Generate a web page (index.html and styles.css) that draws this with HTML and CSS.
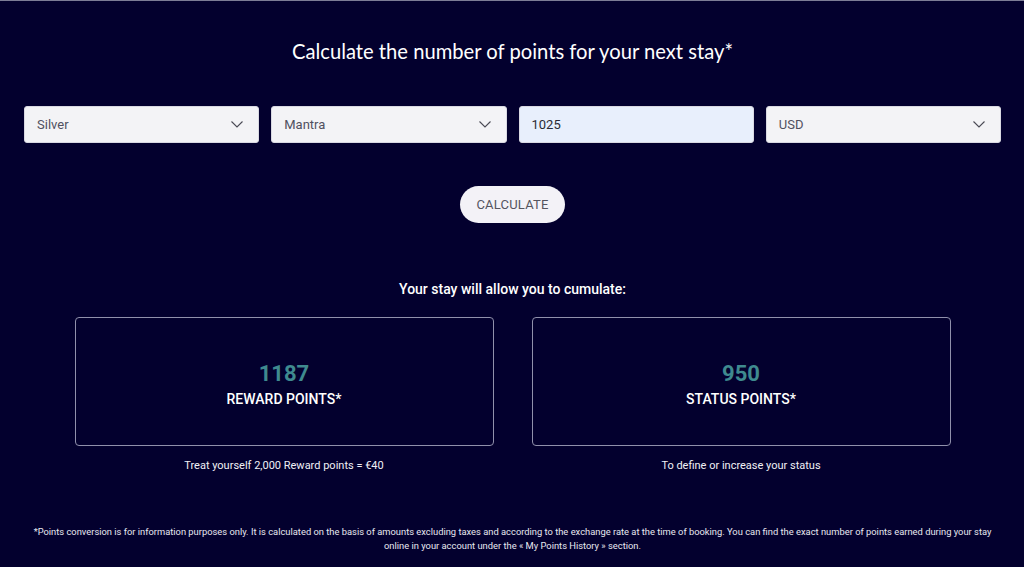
FILE: index.html
```html
<!DOCTYPE html>
<html lang="en">
<head>
<meta charset="utf-8">
<title>Points calculator</title>
<link rel="stylesheet" href="styles.css">
</head>
<body>
<div class="page">
  <h1 class="title">Calculate the number of points for your next stay*</h1>
  <div class="fields">
    <div class="field select"><span>Silver</span><svg class="chev" width="12" height="7" viewBox="0 0 12 7"><path d="M0.5 0.5 L6 6 L11.5 0.5" fill="none" stroke="#4a4a55" stroke-width="1.1"/></svg></div>
    <div class="field select"><span>Mantra</span><svg class="chev" width="12" height="7" viewBox="0 0 12 7"><path d="M0.5 0.5 L6 6 L11.5 0.5" fill="none" stroke="#4a4a55" stroke-width="1.1"/></svg></div>
    <div class="field input"><span>1025</span></div>
    <div class="field select"><span>USD</span><svg class="chev" width="12" height="7" viewBox="0 0 12 7"><path d="M0.5 0.5 L6 6 L11.5 0.5" fill="none" stroke="#4a4a55" stroke-width="1.1"/></svg></div>
  </div>
  <div class="actions"><button class="calc">CALCULATE</button></div>
  <p class="lead">Your stay will allow you to cumulate:</p>
  <div class="results">
    <div class="col">
      <div class="card"><div class="num">1187</div><div class="label">REWARD POINTS*</div></div>
      <p class="note">Treat yourself 2,000 Reward points = €40</p>
    </div>
    <div class="col">
      <div class="card"><div class="num">950</div><div class="label">STATUS POINTS*</div></div>
      <p class="note">To define or increase your status</p>
    </div>
  </div>
  <p class="foot">*Points conversion is for information purposes only. It is calculated on the basis of amounts excluding taxes and according to the exchange rate at the time of booking. You can find the exact number of points earned during your stay online in your account under the « My Points History » section.</p>
</div>
</body>
</html>
```
FILE: styles.css
```css
html, body {
  margin: 0;
  padding: 0;
  background: #03002e;
  height: 100%;
}
body {
  border-top: 1px solid #7d7d96;
  box-sizing: border-box;
  font-family: Roboto, "Liberation Sans", sans-serif;
  color: #fff;
  overflow: hidden;
}
.page {
  padding: 36px 23px 0 24px;
}
.title {
  margin: 0;
  font-family: Lato, "Open Sans", sans-serif;
  font-weight: 400;
  font-size: 20.2px;
  line-height: 28px;
  text-align: center;
  color: #fff;
}
.fields {
  display: grid;
  grid-template-columns: repeat(4, 1fr);
  column-gap: 12px;
  margin-top: 41px;
}
.field {
  height: 37px;
  box-sizing: border-box;
  border-radius: 3px;
  background: #f3f3f6;
  border: 1px solid #d9d9e2;
  display: flex;
  align-items: center;
  justify-content: space-between;
  padding: 0 15px 0 12px;
  font-size: 13px;
  color: #505060;
}
.field.input {
  background: #e8effc;
  color: #2b2b35;
}
.chev { display: block; }
.actions {
  display: flex;
  justify-content: center;
  margin-top: 43px;
}
.calc {
  width: 105px;
  height: 37px;
  border: none;
  border-radius: 19px;
  background: #f3f2f7;
  color: #55555f;
  font-family: Roboto, "Liberation Sans", sans-serif;
  font-size: 13px;
  letter-spacing: 0.2px;
  padding: 0;
}
.lead {
  margin: 57px 0 0;
  text-align: center;
  font-size: 14px;
  font-weight: 500;
  line-height: 18px;
}
.results {
  display: flex;
  justify-content: center;
  gap: 38px;
  margin-top: 19px;
}
.col {
  width: 419px;
}
.card {
  height: 129px;
  box-sizing: border-box;
  border: 1px solid #9090ab;
  border-radius: 4px;
  display: flex;
  flex-direction: column;
  align-items: center;
  justify-content: center;
  padding-top: 6px;
}
.num {
  font-size: 22px;
  font-weight: 700;
  color: #3f8a8f;
  line-height: 26px;
}
.label {
  font-size: 14px;
  font-weight: 500;
  line-height: 18px;
  margin-top: 3px;
}
.note {
  margin: 13px 0 0;
  text-align: center;
  font-size: 11px;
  line-height: 14px;
  color: #f0f0f5;
}
.foot {
  margin: 52px 0 0;
  padding: 0;
  text-align: center;
  font-size: 9.35px;
  line-height: 14px;
  color: #e8e8f0;
}
```
